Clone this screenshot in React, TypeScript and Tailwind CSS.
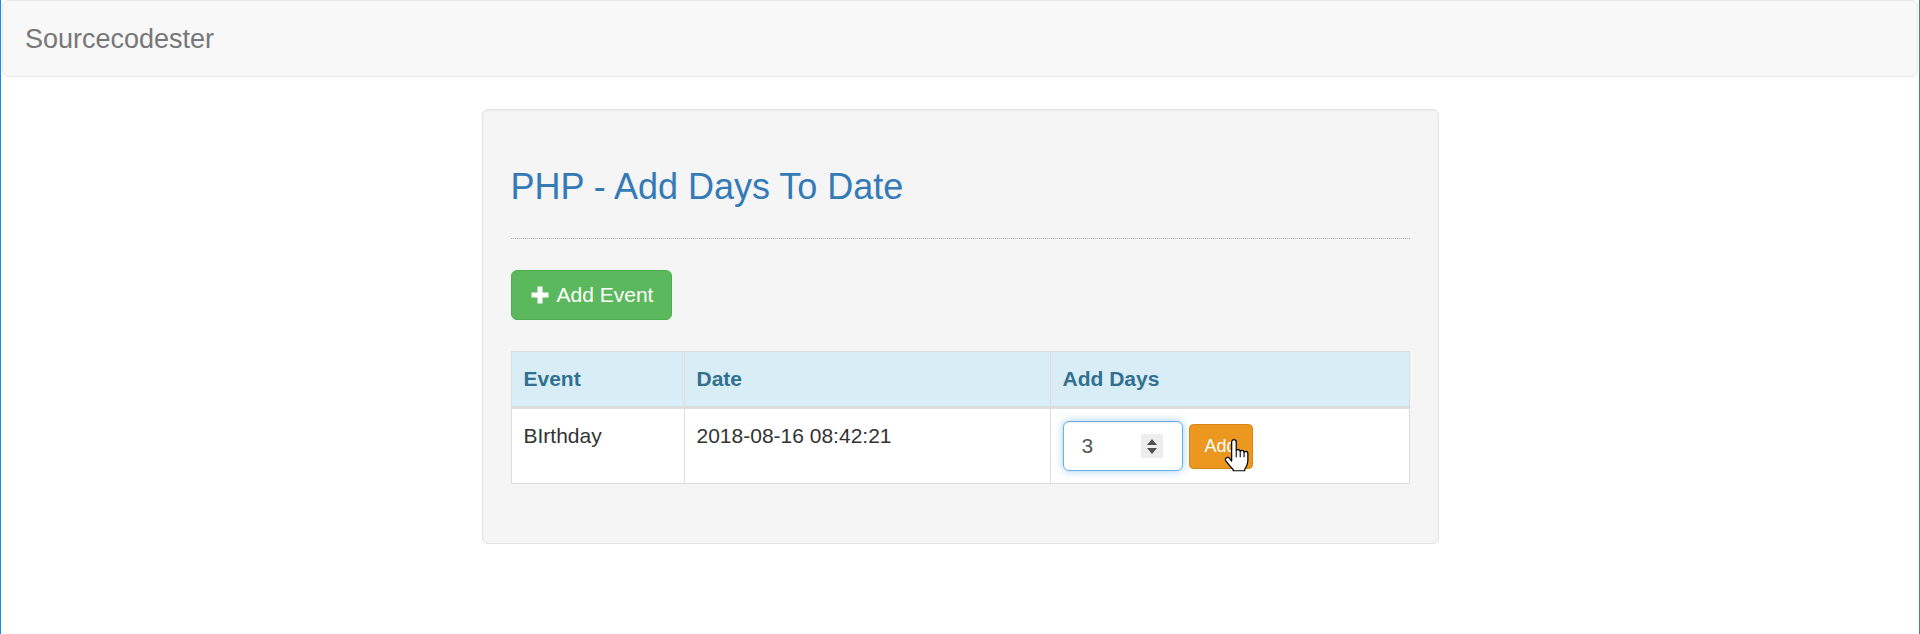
import { useState } from "react"

type EventRow = { id: number; name: string; date: string; days: number }

const rows: EventRow[] = [{ id: 1, name: "BIrthday", date: "2018-08-16 08:42:21", days: 3 }]

function PlusIcon() {
  return (
    <svg width="20" height="20" viewBox="0 0 20 20" className="shrink-0">
      <path d="M7.5 1.5h5v6h6v5h-6v6h-5v-6h-6v-5h6z" fill="#fff" />
    </svg>
  )
}

function HandCursor() {
  return (
    <svg
      width="26"
      height="34"
      viewBox="0 0 17 22"
      className="pointer-events-none absolute left-[35px] top-[14px]"
    >
      <path
        d="M6.5 1C7.3 1 8 1.6 8 2.5V8C8.3 7.6 8.8 7.5 9.3 7.5C10 7.5 10.5 8 10.6 8.6C10.9 8.2 11.3 8 11.8 8C12.5 8 13 8.5 13.1 9.1C13.4 8.8 13.8 8.7 14.2 8.7C15 8.7 15.6 9.3 15.6 10.1V15C15.6 17.5 14.2 19.5 13.5 20.5V21.3H6V20.5C4.5 19 2.5 16.5 1.2 14.8C0.7 14.1 0.9 13.2 1.6 12.8C2.3 12.4 3.2 12.6 3.7 13.3L5 15V2.5C5 1.6 5.7 1 6.5 1Z"
        fill="#fff"
        stroke="#000"
        strokeWidth="0.8"
        strokeLinejoin="round"
      />
      <path d="M8 8V12.5M10.6 8.6V12.5M13.1 9.1V12.5" stroke="#000" strokeWidth="0.7" fill="none" />
    </svg>
  )
}

function DaysInput({ value }: { value: number }) {
  return (
    <div className="flex h-[50px] w-[120px] items-center justify-between rounded-[6px] border border-[#66afe9] bg-white pl-[18px] pr-[19px] shadow-[inset_0_1px_1px_rgba(0,0,0,0.075),0_0_8px_rgba(102,175,233,0.6)]">
      <span className="text-[21px] leading-[30px] text-[#555]">{value}</span>
      <div className="flex h-[24px] w-[22px] flex-col items-center justify-center gap-[3px] bg-[#ededed]">
        <svg width="10" height="6" viewBox="0 0 10 6">
          <path d="M5 0L10 6H0z" fill="#505050" />
        </svg>
        <svg width="10" height="6" viewBox="0 0 10 6">
          <path d="M0 0H10L5 6z" fill="#505050" />
        </svg>
      </div>
    </div>
  )
}

export default function App() {
  const [events] = useState(rows)

  return (
    <div className="min-h-[634px] border-l border-r border-l-[#1e88e5] border-r-[#3a7fcf] bg-white font-['Liberation_Sans',Arial,sans-serif] text-[21px] text-[#333]">
      <nav className="mx-px h-[77px] rounded-[6px] border border-[#e7e7e7] bg-[#f8f8f8] pl-[22px] pt-[23px]">
        <span className="text-[27px] leading-[30px] text-[#777]">Sourcecodester</span>
      </nav>

      <div className="mx-auto mt-[32px] w-[957px] rounded-[6px] border border-[#e3e3e3] bg-[#f5f5f5] px-[28px] pb-[59px] pt-[57px] shadow-[inset_0_1px_1px_rgba(0,0,0,0.05)]">
        <h3 className="text-[36px] leading-[40px] text-[#337ab7]">PHP - Add Days To Date</h3>
        <div className="mt-[31px] border-t border-dotted border-[#a8a8a8]" />

        <button className="mt-[31px] flex h-[50px] items-center gap-[7px] rounded-[6px] border border-[#4cae4c] bg-[#5cb85c] px-[18px] text-[21px] leading-[30px] text-white">
          <PlusIcon />
          Add Event
        </button>

        <table className="mt-[31px] w-full table-fixed border-collapse border border-[#ddd] bg-white text-left">
          <colgroup>
            <col className="w-[173px]" />
            <col className="w-[366px]" />
            <col />
          </colgroup>
          <thead>
            <tr className="bg-[#d9edf7] text-[#31708f]">
              <th className="border border-b-[3px] border-[#ddd] px-[12px] py-[12px] font-bold leading-[30px]">Event</th>
              <th className="border border-b-[3px] border-[#ddd] px-[12px] py-[12px] font-bold leading-[30px]">Date</th>
              <th className="border border-b-[3px] border-[#ddd] px-[12px] py-[12px] font-bold leading-[30px]">Add Days</th>
            </tr>
          </thead>
          <tbody>
            {events.map((ev) => (
              <tr key={ev.id}>
                <td className="border border-[#ddd] px-[12px] py-[12px] align-top leading-[30px]">{ev.name}</td>
                <td className="border border-[#ddd] px-[12px] py-[12px] align-top leading-[30px]">{ev.date}</td>
                <td className="border border-[#ddd] px-[12px] py-[12px] align-top">
                  <div className="flex items-center gap-[6px]">
                    <DaysInput value={ev.days} />
                    <div className="relative">
                      <button className="h-[45px] rounded-[4.5px] border border-[#d58512] bg-[#ec971f] px-[15px] text-[18px] leading-[27px] text-white">
                        Add
                      </button>
                      <HandCursor />
                    </div>
                  </div>
                </td>
              </tr>
            ))}
          </tbody>
        </table>
      </div>
    </div>
  )
}
